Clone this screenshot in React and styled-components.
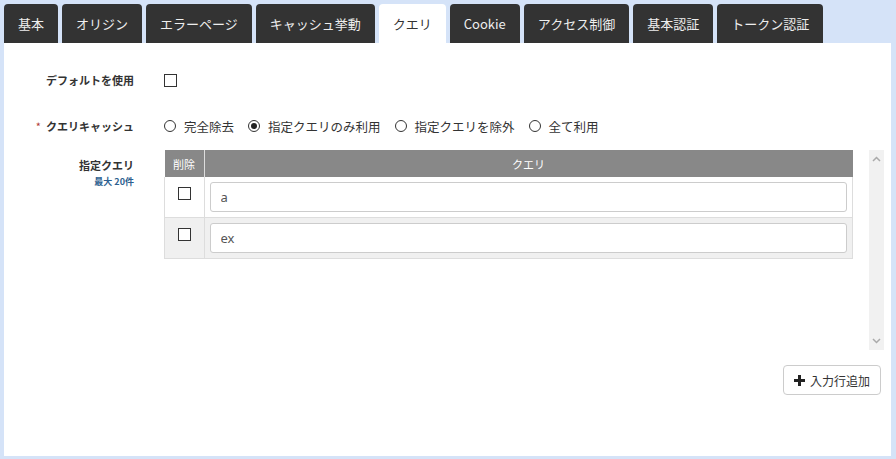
import React from 'react';
import styled, { createGlobalStyle } from 'styled-components';

const GlobalStyle = createGlobalStyle`
    html, body {
        margin:0;
        padding:0;
        background:#d5e3f8;
    }
    body {
        font-family:"Noto Sans CJK JP", "Noto Sans", sans-serif;
        color:#333;
    }
`

const tabs = ['基本', 'オリジン', 'エラーページ', 'キャッシュ挙動', 'クエリ', 'Cookie', 'アクセス制御', '基本認証', 'トークン認証'];
const radios = ['完全除去', '指定クエリのみ利用', '指定クエリを除外', '全て利用'];
const queries = ['a', 'ex'];

const App = () => {
    return(
        <Page>
            <GlobalStyle />
            <TabBar>
                {tabs.map((t) => (
                    <Tab key={t} $active={t === 'クエリ'}>{t}</Tab>
                ))}
            </TabBar>
            <Panel>
                <FormRow>
                    <LabelCol>
                        <Label>デフォルトを使用</Label>
                    </LabelCol>
                    <Checkbox />
                </FormRow>
                <FormRow $gap={22}>
                    <LabelCol>
                        <Label><Required>*</Required>クエリキャッシュ</Label>
                    </LabelCol>
                    <RadioGroup>
                        {radios.map((r, i) => (
                            <RadioItem key={r}>
                                <Radio $checked={i === 1} />
                                {r}
                            </RadioItem>
                        ))}
                    </RadioGroup>
                </FormRow>
                <FormRow $gap={12} $top>
                    <LabelCol $top>
                        <Label>指定クエリ</Label>
                        <Hint>最大 20件</Hint>
                    </LabelCol>
                    <ScrollArea>
                        <TableWrap>
                            <Table>
                                <thead>
                                    <tr>
                                        <Th $narrow>削除</Th>
                                        <Th>クエリ</Th>
                                    </tr>
                                </thead>
                                <tbody>
                                    {queries.map((q, i) => (
                                        <Tr key={q} $alt={i % 2 === 1}>
                                            <CheckCell><Checkbox /></CheckCell>
                                            <Td><TextInput defaultValue={q} /></Td>
                                        </Tr>
                                    ))}
                                </tbody>
                            </Table>
                        </TableWrap>
                        <Scrollbar>
                            <svg width="9" height="6" viewBox="0 0 9 6">
                                <path d="M1 5l3.5-3.5L8 5" stroke="#aaa" strokeWidth="1.5" fill="none" />
                            </svg>
                            <svg width="9" height="6" viewBox="0 0 9 6">
                                <path d="M1 1l3.5 3.5L8 1" stroke="#aaa" strokeWidth="1.5" fill="none" />
                            </svg>
                        </Scrollbar>
                    </ScrollArea>
                </FormRow>
                <ButtonRow>
                    <AddButton>
                        <svg width="11" height="11" viewBox="0 0 11 11">
                            <path d="M4 0h3v4h4v3H7v4H4V7H0V4h4z" fill="#222" />
                        </svg>
                        入力行追加
                    </AddButton>
                </ButtonRow>
            </Panel>
        </Page>
    );
};

const Page = styled.div`
    padding:4px 5px 3px 4px;
    height:459px;
    box-sizing:border-box;
    display:flex;
    flex-direction:column;
`
const TabBar = styled.div`
    display:flex;
    gap:4px;
    height:39px;
`
const Tab = styled.div`
    padding:0 14px;
    display:flex;
    align-items:center;
    font-size:13px;
    border-radius:4px 4px 0 0;
    background:${p => p.$active ? '#fff' : '#333'};
    color:${p => p.$active ? '#333' : '#eee'};
`
const Panel = styled.div`
    flex:1;
    background:#fff;
    padding:25px 7px 0 0;
`
const FormRow = styled.div`
    display:flex;
    align-items:${p => p.$top ? 'flex-start' : 'center'};
    min-height:24px;
    margin-top:${p => p.$gap || 0}px;
`
const LabelCol = styled.div`
    width:130px;
    margin-right:30px;
    padding-top:${p => p.$top ? '7px' : '0'};
    display:flex;
    flex-direction:column;
    align-items:flex-end;
    flex-shrink:0;
`
const Label = styled.div`
    font-size:11px;
    font-weight:bold;
    color:#333;
    text-align:right;
`
const Hint = styled.div`
    font-size:9px;
    font-weight:bold;
    color:#2d5f8f;
    margin-top:2px;
`
const Required = styled.span`
    color:#b03a3a;
    margin-right:5px;
    font-weight:normal;
`
const Checkbox = styled.span`
    display:inline-block;
    width:11px;
    height:11px;
    border:1px solid #333;
    background:#fff;
`
const RadioGroup = styled.div`
    display:flex;
    gap:14px;
`
const RadioItem = styled.label`
    display:flex;
    align-items:center;
    gap:8px;
    font-size:12.5px;
    color:#333;
`
const Radio = styled.span`
    width:10px;
    height:10px;
    border:1px solid #333;
    border-radius:50%;
    display:flex;
    align-items:center;
    justify-content:center;
    &:after{
        content:"";
        width:6px;
        height:6px;
        border-radius:50%;
        background:${p => p.$checked ? '#222' : 'transparent'};
    }
`
const ScrollArea = styled.div`
    flex:1;
    height:200px;
    display:flex;
`
const TableWrap = styled.div`
    flex:1;
    margin-right:16px;
`
const Table = styled.table`
    width:100%;
    border-collapse:collapse;
`
const Th = styled.th`
    background:#888;
    color:#fff;
    font-size:11px;
    font-weight:normal;
    height:27px;
    padding:0;
    width:${p => p.$narrow ? '39px' : 'auto'};
    border-left:1px solid #ddd;
    &:first-child{
        border-left:none;
    }
`
const Tr = styled.tr`
    background:${p => p.$alt ? '#f0f0f0' : '#fff'};
    border-bottom:1px solid #ddd;
`
const Td = styled.td`
    padding:5px;
    height:30px;
    border-left:1px solid #ddd;
    border-right:1px solid #ddd;
`
const CheckCell = styled.td`
    text-align:center;
    vertical-align:top;
    padding-top:10px;
    line-height:0;
    border-left:1px solid #ddd;
`
const TextInput = styled.input`
    width:100%;
    height:30px;
    box-sizing:border-box;
    border:1px solid #ccc;
    border-radius:3px;
    padding:0 10px;
    font-size:13px;
    color:#555;
    font-family:"Noto Sans", sans-serif;
    background:#fff;
    outline:none;
`
const Scrollbar = styled.div`
    width:15px;
    background:#f1f1f1;
    display:flex;
    flex-direction:column;
    justify-content:space-between;
    align-items:center;
    padding:6px 0;
    box-sizing:border-box;
`
const ButtonRow = styled.div`
    display:flex;
    justify-content:flex-end;
    margin-top:15px;
    padding-right:3px;
`
const AddButton = styled.button`
    display:flex;
    align-items:center;
    gap:5px;
    height:30px;
    padding:0 10px;
    background:#fff;
    border:1px solid #ccc;
    border-radius:4px;
    font-size:12px;
    color:#333;
    font-family:"Noto Sans CJK JP", sans-serif;
`

export default App;
